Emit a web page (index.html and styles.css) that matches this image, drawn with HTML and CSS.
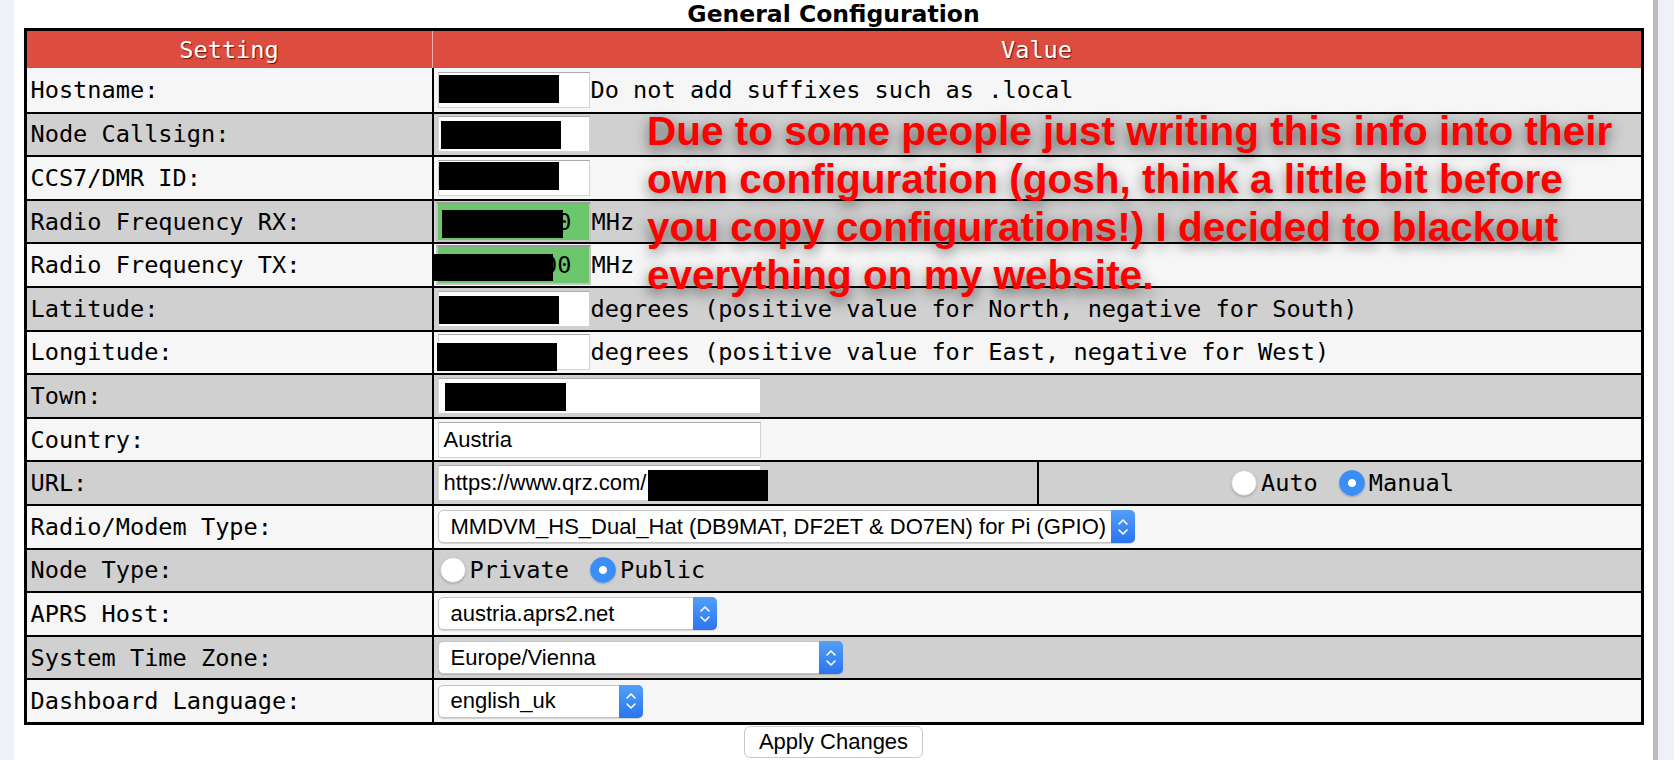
FILE: index.html
```html
<!DOCTYPE html>
<html lang="en">
<head>
  <meta charset="UTF-8">
  <meta name="viewport" content="width=device-width, initial-scale=1.0">
  <title>General Configuration</title>
  <link rel="stylesheet" href="styles.css">
</head>
<body>
<div class="page">

  <div class="title">General Configuration</div>

  <table class="config">
    <colgroup>
      <col class="col-setting">
      <col class="col-value">
      <col class="col-extra">
    </colgroup>
    <tr class="head">
      <th>Setting</th>
      <th colspan="2">Value</th>
    </tr>
    <tr>
      <td class="label">Hostname:</td>
      <td colspan="2"><div class="val">
        <span class="field"><span class="redact r-host"></span></span>
        <span class="hint">Do not add suffixes such as .local</span>
      </div></td>
    </tr>
    <tr>
      <td class="label">Node Callsign:</td>
      <td colspan="2"><div class="val">
        <span class="field"><span class="redact r-call"></span></span>
      </div></td>
    </tr>
    <tr>
      <td class="label">CCS7/DMR ID:</td>
      <td colspan="2"><div class="val">
        <span class="field"><span class="redact r-id"></span></span>
      </div></td>
    </tr>
    <tr>
      <td class="label">Radio Frequency RX:</td>
      <td colspan="2"><div class="val">
        <span class="field field-freq">0<span class="redact r-rx"></span></span>
        <span class="hint">MHz</span>
      </div></td>
    </tr>
    <tr>
      <td class="label">Radio Frequency TX:</td>
      <td colspan="2"><div class="val">
        <span class="field field-freq">00<span class="redact r-tx"></span></span>
        <span class="hint">MHz</span>
      </div></td>
    </tr>
    <tr>
      <td class="label">Latitude:</td>
      <td colspan="2"><div class="val">
        <span class="field"><span class="redact r-lat"></span></span>
        <span class="hint">degrees (positive value for North, negative for South)</span>
      </div></td>
    </tr>
    <tr>
      <td class="label">Longitude:</td>
      <td colspan="2"><div class="val">
        <span class="field"><span class="redact r-long"></span></span>
        <span class="hint">degrees (positive value for East, negative for West)</span>
      </div></td>
    </tr>
    <tr>
      <td class="label">Town:</td>
      <td colspan="2"><div class="val">
        <span class="field field-wide"><span class="redact r-town"></span></span>
      </div></td>
    </tr>
    <tr>
      <td class="label">Country:</td>
      <td colspan="2"><div class="val">
        <span class="field field-wide">Austria</span>
      </div></td>
    </tr>
    <tr>
      <td class="label">URL:</td>
      <td><div class="val">
        <span class="field field-wide">https://www.qrz.com/<span class="redact-inline"></span></span>
      </div></td>
      <td><div class="val val-center">
        <label class="choice"><input type="radio" name="urlmode">Auto</label>
        <label class="choice"><input type="radio" name="urlmode" checked>Manual</label>
      </div></td>
    </tr>
    <tr>
      <td class="label">Radio/Modem Type:</td>
      <td colspan="2"><div class="val">
        <span class="select select-modem">
          <span class="select-text">MMDVM_HS_Dual_Hat (DB9MAT, DF2ET &amp; DO7EN) for Pi (GPIO)</span>
          <span class="stepper"><svg width="12" height="20" viewBox="0 0 12 20"><path d="M2 7 L6 3 L10 7 M2 13 L6 17 L10 13" fill="none" stroke="#fff" stroke-width="1.6" stroke-linecap="round" stroke-linejoin="round"/></svg></span>
        </span>
      </div></td>
    </tr>
    <tr>
      <td class="label">Node Type:</td>
      <td colspan="2"><div class="val">
        <label class="choice"><input type="radio" name="nodetype">Private</label>
        <label class="choice"><input type="radio" name="nodetype" checked>Public</label>
      </div></td>
    </tr>
    <tr>
      <td class="label">APRS Host:</td>
      <td colspan="2"><div class="val">
        <span class="select select-aprs">
          <span class="select-text">austria.aprs2.net</span>
          <span class="stepper"><svg width="12" height="20" viewBox="0 0 12 20"><path d="M2 7 L6 3 L10 7 M2 13 L6 17 L10 13" fill="none" stroke="#fff" stroke-width="1.6" stroke-linecap="round" stroke-linejoin="round"/></svg></span>
        </span>
      </div></td>
    </tr>
    <tr>
      <td class="label">System Time Zone:</td>
      <td colspan="2"><div class="val">
        <span class="select select-tz">
          <span class="select-text">Europe/Vienna</span>
          <span class="stepper"><svg width="12" height="20" viewBox="0 0 12 20"><path d="M2 7 L6 3 L10 7 M2 13 L6 17 L10 13" fill="none" stroke="#fff" stroke-width="1.6" stroke-linecap="round" stroke-linejoin="round"/></svg></span>
        </span>
      </div></td>
    </tr>
    <tr>
      <td class="label">Dashboard Language:</td>
      <td colspan="2"><div class="val">
        <span class="select select-lang">
          <span class="select-text">english_uk</span>
          <span class="stepper"><svg width="12" height="20" viewBox="0 0 12 20"><path d="M2 7 L6 3 L10 7 M2 13 L6 17 L10 13" fill="none" stroke="#fff" stroke-width="1.6" stroke-linecap="round" stroke-linejoin="round"/></svg></span>
        </span>
      </div></td>
    </tr>
  </table>

  <div class="actions">
    <button type="button">Apply Changes</button>
  </div>

  <p class="notice">Due to some people just writing this info into their<br>own configuration (gosh, think a little bit before<br>you copy configurations!) I decided to blackout<br>everything on my website.</p>

</div>
</body>
</html>
```

FILE: styles.css
```css
body {
  margin: 0;
  background-color: #eef1f6;
  font-family: "DejaVu Sans Mono", "Liberation Mono", monospace;
  color: #000;
}
.page {
  position: relative;
  margin-left: 14px;
  width: 1639px;
  min-height: 760px;
  background-color: #fff;
  border-right: 5px solid #bcbcbc;
}
.title {
  height: 28px;
  line-height: 28px;
  text-align: center;
  font-family: "DejaVu Sans", sans-serif;
  font-weight: bold;
  font-size: 23.5px;
}
.config {
  width: 1620px;
  margin: 0 auto;
  table-layout: fixed;
  border-collapse: separate;
  border-spacing: 0;
  border: 3px solid #000;
  font-size: 23.6px;
}
.col-setting { width: 405px; }
.col-value { width: 605px; }
.col-extra { width: 604px; }
.config tr {
  height: 43.6px;
}
.config tr.head {
  height: 37px;
}
.config th {
  background-color: #dc4d40;
  color: #fff;
  font-weight: normal;
  padding: 0;
  text-shadow: 1px 1px 1px #6e1009;
}
.config th + th {
  border-left: 1px solid #ebb0aa;
}
.config td {
  padding: 0;
  background-color: #f6f6f6;
  border-top: 2px solid #000;
  vertical-align: middle;
}
.config tr:nth-child(2) td {
  border-top: none;
}
.config tr:nth-child(odd) td {
  background-color: #d0d0d0;
}
.config td + td {
  border-left: 2px solid #000;
}
.config td.label {
  padding-left: 4px;
  white-space: nowrap;
}
.val {
  display: flex;
  align-items: center;
  padding-left: 4px;
  white-space: nowrap;
}
.val-center {
  justify-content: center;
}
.hint {
  margin-left: 1px;
}

/* text boxes */
.field {
  position: relative;
  display: inline-flex;
  align-items: center;
  box-sizing: border-box;
  width: 152px;
  height: 36px;
  padding: 0 5px;
  background-color: #fff;
  border: 1px solid #d2d2d2;
  border-top-color: #ababab;
  font-family: "Liberation Sans", Arial, sans-serif;
  font-size: 22px;
}
.field-wide {
  width: 323px;
}
.field-freq {
  width: 155px;
  height: 40px;
  margin-left: -2px;
  justify-content: flex-end;
  padding-right: 17px;
  border: 2px solid #c4c4c4;
  border-top-color: #9c9c9c;
  background-color: #6cc76c;
  font-family: "DejaVu Sans Mono", monospace;
  font-size: 23.6px;
}
.redact {
  position: absolute;
  left: 0;
  top: 2px;
  width: 120px;
  height: 28px;
  background-color: #000;
}
.r-call { left: 2px; top: 4px; }
.r-id { top: 1px; }
.r-rx { left: 4px; top: 6px; width: 121px; }
.r-tx { left: -4px; top: 7px; width: 119px; height: 27px; }
.r-lat { top: 4px; }
.r-long { left: -2px; top: 8px; }
.r-town { left: 6px; top: 4px; width: 121px; }
.redact-inline {
  display: inline-block;
  width: 120px;
  height: 31px;
  margin-left: 2px;
  margin-top: 4px;
  background-color: #000;
  flex: none;
}

/* radios */
.choice {
  display: inline-flex;
  align-items: center;
  margin-right: 19px;
}
.choice:last-child {
  margin-right: 0;
}
.choice input {
  appearance: none;
  -webkit-appearance: none;
  width: 26px;
  height: 26px;
  margin: 0 4px 0 2px;
  border-radius: 50%;
  border: 1px solid #cbcbcb;
  background-color: #fff;
  box-shadow: 0 1px 2px rgba(0, 0, 0, 0.2);
}
.choice input:checked {
  border-color: #3a8ef6;
  background: radial-gradient(circle, #fff 0 3.5px, #3a8ef6 4.5px);
}

/* selects */
.select {
  display: inline-flex;
  box-sizing: border-box;
  height: 33px;
  border: 1px solid #c4c4c4;
  border-radius: 5px;
  background-color: #fff;
  box-shadow: 0 1px 1px rgba(0, 0, 0, 0.15);
  font-family: "Liberation Sans", Arial, sans-serif;
  font-size: 22px;
}
.select-text {
  flex: 1;
  display: flex;
  align-items: center;
  padding-left: 12px;
}
.stepper {
  display: flex;
  align-items: center;
  justify-content: center;
  width: 24px;
  margin: -1px -1px -1px 0;
  border-radius: 0 5px 5px 0;
  background: linear-gradient(#52a0f9, #2a74ef);
}
.select-modem { width: 697px; }
.select-aprs { width: 279px; }
.select-tz { width: 405px; }
.select-lang { width: 205px; }

.actions {
  text-align: center;
  padding-top: 1px;
}
.actions button {
  width: 179px;
  height: 32px;
  padding: 0;
  background-color: #fff;
  border: 1px solid #c9c9c9;
  border-radius: 6px;
  font-family: "Liberation Sans", Arial, sans-serif;
  font-size: 22px;
  color: #000;
}

.notice {
  position: absolute;
  left: 633px;
  top: 107px;
  margin: 0;
  white-space: nowrap;
  font-family: "Liberation Sans", Arial, sans-serif;
  font-weight: bold;
  font-size: 40.5px;
  line-height: 48px;
  color: #f00;
  text-shadow: 0 5px 14px rgba(0, 0, 0, 0.6);
}
```
